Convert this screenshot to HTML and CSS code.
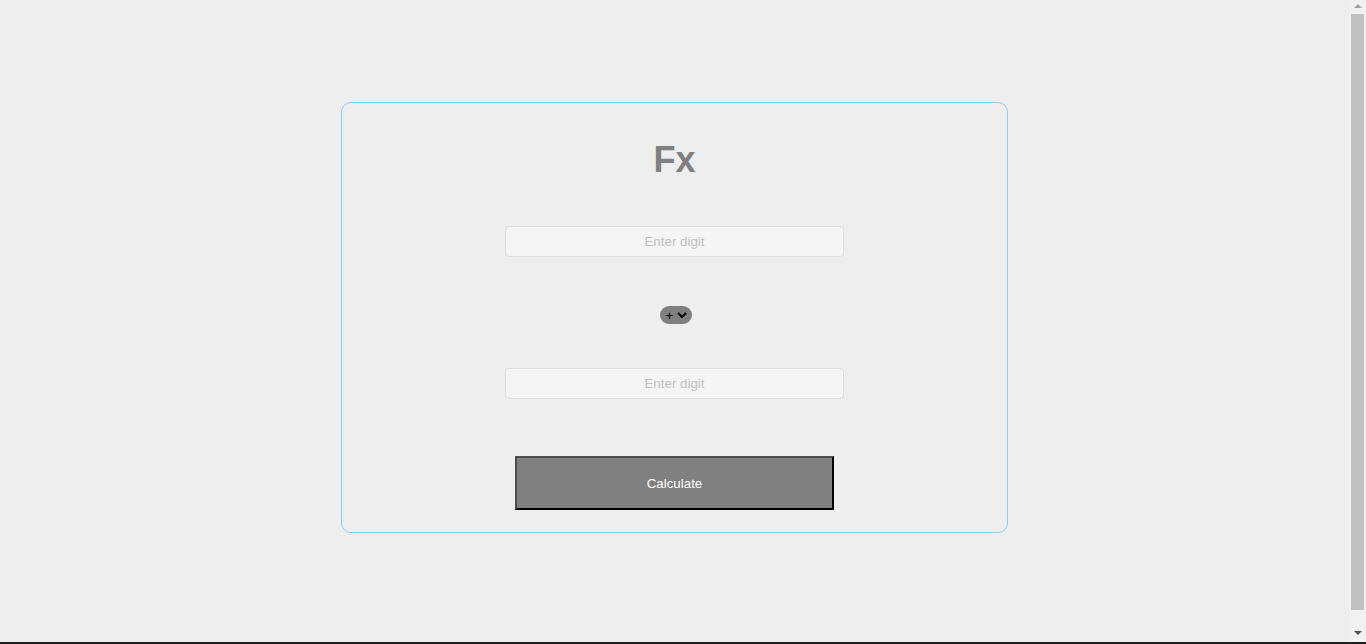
FILE: index.html
```html
<!DOCTYPE html>
<html lang="en">
<head>
    <title>Fx</title>
    <meta charset="UTF-8">
    <meta name="viewport" content="width=device-width, initial-scale=1.0">

    <link rel="stylesheet" href="styles.css">

    <script>
    function calculate(){
        var a = parseFloat(document.getElementById("first").value)
        var b = parseFloat(document.getElementById("second").value)
        var op = document.getElementById("op").value

        if (isNaN(a) || isNaN(b)){
            alert("Please enter only numbers!")
            return
        }

        var result
        if (op == "+") result = a + b
        if (op == "-") result = a - b
        if (op == "*") result = a * b
        if (op == "/") result = a / b
        alert(result)
    }
    </script>
</head>
<body>
    <div class="calc">
        <h1 class="title">Fx</h1>
        <input type="text" id="first" class="digit" placeholder="Enter digit">

        <div class="op-wrap">
            <select id="op" class="op">
                <option>+</option>
                <option>-</option>
                <option>*</option>
                <option>/</option>
            </select>
            <svg class="chevron" width="10" height="6" viewBox="0 0 10 6"><path d="M1 1 L5 5 L9 1" fill="none" stroke="#000" stroke-width="2.2"/></svg>
        </div>

        <input type="text" id="second" class="digit" placeholder="Enter digit">
        <button onclick="calculate()" class="button" id="calc">Calculate</button>
    </div>

    <!-- window scrollbar + frame edge, the browser here draws none -->
    <div class="scrollbar">
        <svg class="arrow up" width="8" height="4" viewBox="0 0 8 4"><path d="M0 4 L4 0 L8 4 Z" fill="#a3a3a3"/></svg>
        <div class="thumb"></div>
        <svg class="arrow down" width="8" height="4" viewBox="0 0 8 4"><path d="M0 0 L8 0 L4 4 Z" fill="#505050"/></svg>
    </div>
    <div class="edge"></div>
</body>
</html>
```

FILE: styles.css
```css
:root{
    --bg: #eeeeee;
    --field: #f5f5f5;
    --field-line: #dedede;
    --gray: #808080;
    --line: #87cefa;
    --text: #ffffff;
}

html, body{
    background-color: var(--bg);
}

body{
    margin: 8px 25px 8px 8px;
    height: 100vh;
    font-family: "Liberation Sans", Arial, sans-serif;
}

.calc{
    width: 665px;
    margin: 94px auto 0;
    padding: 39px 0 22px;
    border: 1px solid var(--line);
    border-radius: 10px;
    display: flex;
    flex-direction: column;
    align-items: center;
}

.title{
    margin: 0;
    font-size: 36px;
    line-height: 36px;
    font-weight: bold;
    color: var(--gray);
}

.digit{
    box-sizing: border-box;
    width: 339px;
    height: 31px;
    margin-top: 48px;
    background-color: var(--field);
    border: 1px solid var(--field-line);
    border-radius: 4px;
    text-align: center;
    font-family: inherit;
    font-size: 13.333px;
    outline: none;
}

.digit::placeholder{
    color: #c0c0c0;
}

#second{
    margin-top: 44px;
}

.op-wrap{
    position: relative;
    margin-top: 49px;
    margin-left: 2px;
    height: 18px;
}

.op{
    appearance: none;
    -webkit-appearance: none;
    display: block;
    width: 32px;
    height: 18px;
    padding: 0 0 0 6px;
    border: none;
    border-radius: 9px;
    background-color: var(--gray);
    color: #000;
    font-family: inherit;
    font-size: 13.333px;
    outline: none;
}

.chevron{
    position: absolute;
    right: 5px;
    top: 6px;
    pointer-events: none;
}

.button{
    box-sizing: border-box;
    width: 319px;
    height: 54px;
    margin-top: 57px;
    background-color: var(--gray);
    color: var(--text);
    border: 2px solid;
    border-color: #4d4d4d #000 #000 #4d4d4d;
    font-family: inherit;
    font-size: 13.333px;
}

.scrollbar{
    position: fixed;
    top: 0;
    right: 0;
    bottom: 0;
    width: 17px;
    background-color: #f1f1f1;
}

.thumb{
    position: absolute;
    top: 14px;
    left: 2px;
    width: 13px;
    height: 596px;
    background-color: #c1c1c1;
}

.arrow{
    position: absolute;
    left: 5px;
}

.arrow.up{
    top: 4px;
}

.arrow.down{
    bottom: 9px;
}

.edge{
    position: fixed;
    left: 0;
    right: 0;
    bottom: 0;
    height: 2px;
    background-color: #1f1f1f;
}
```
